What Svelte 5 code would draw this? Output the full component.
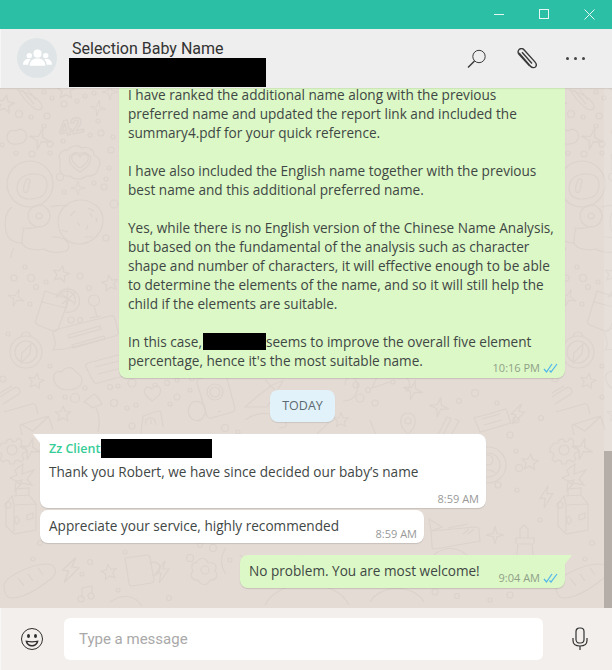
<script lang="ts">
  const messageBody = [
    "I have ranked the additional name along with the previous preferred name and updated the report link and included the summary4.pdf for your quick reference.",
    "I have also included the English name together with the previous best name and this additional preferred name.",
    "Yes, while there is no English version of the Chinese Name Analysis, but based on the fundamental of the analysis such as character shape and number of characters, it will effective enough to be able to determine the elements of the name, and so it will still help the child if the elements are suitable.",
  ];

  // wallpaper: one tile of the doodle pattern, page coordinates minus the chat offset
  const star = "M0-8 2.400-2.600 8-2.200 3.800 1.400 5 7 0 4.200-5 7-3.800 1.400-8-2.200-2.400-2.600Z";
  const spark = "M0-10 2-2 10 0 2 2 0 10-2 2-10 0-2-2Z";
  const bolt = "M3-11-6 1h5L-3 11 7-3H1Z";

  const stamps = [
    { d: star, x: 5, y: 104, s: 1.1, r: 10 },
    { d: star, x: 66, y: 90, s: 1.1, r: 0 },
    { d: spark, x: 110, y: 92, s: 0.8, r: 0 },
    { d: spark, x: 98, y: 108, s: 0.8, r: 10 },
    { d: spark, x: 40, y: 139, s: 1.1, r: 15 },
    { d: spark, x: 78, y: 188, s: 0.7, r: 0 },
    { d: star, x: 61, y: 274, s: 1, r: 12 },
    { d: star, x: 110, y: 283, s: 1, r: -10 },
    { d: spark, x: 16, y: 298, s: 0.9, r: 20 },
    { d: star, x: 36, y: 381, s: 0.95, r: 10 },
    { d: star, x: 63, y: 414, s: 0.95, r: 0 },
    { d: spark, x: 30, y: 449, s: 1.1, r: 15 },
    { d: bolt, x: 70, y: 570, s: 1.2, r: 10 },
    { d: star, x: 109, y: 572, s: 0.95, r: -10 },
    { d: star, x: 341, y: 420, s: 0.9, r: 0 },
    { d: spark, x: 413, y: 390, s: 1, r: 15 },
    { d: spark, x: 439, y: 407, s: 1, r: 10 },
    { d: bolt, x: 517, y: 414, s: 1, r: 10 },
    { d: bolt, x: 546, y: 497, s: 1, r: -5 },
    { d: spark, x: 495, y: 535, s: 0.9, r: 0 },
    { d: star, x: 530, y: 462, s: 1, r: 5 },
    { d: bolt, x: 162, y: 572, s: 1, r: 0 },
    { d: star, x: 285, y: 570, s: 0.9, r: 8 },
  ];

  const dots = [
    [44, 92, 2], [52, 98, 2], [85, 96, 2], [77, 101, 2], [94, 93, 2], [64, 104, 3], [19, 114, 3.500], [31, 117, 2],
    [47, 116, 3], [44, 126, 2], [98, 121, 2], [101, 133, 3], [90, 135, 2], [113, 137, 2], [111, 150, 3], [2, 145, 2],
    [16, 153, 2], [32, 154, 3], [50, 153, 2], [50, 144, 3], [63, 141, 2], [60, 177, 3.500], [64, 192, 2], [94, 183, 2],
    [104, 187, 3], [109, 168, 2], [106, 179, 2], [114, 204, 4], [106, 238, 3], [25, 267, 2], [14, 278, 3], [31, 278, 3.500],
    [36, 287, 2.500], [46, 282, 2], [80, 276, 3], [89, 288, 2.500], [30, 304, 2], [71, 320, 3], [80, 320, 2.500],
    [8, 334, 2], [50, 366, 2], [3, 379, 3], [85, 388, 2], [110, 387, 2.500], [118, 386, 2], [50, 397, 2], [65, 397, 2],
    [75, 398, 4.500], [114, 403, 3.500], [132, 383, 4], [155, 385, 2], [167, 383, 2.500], [177, 380, 2], [177, 397, 3],
    [190, 390, 2], [192, 378, 2.500], [127, 408, 2], [136, 405, 2], [132, 426, 3], [170, 404, 2], [225, 428, 3.500],
    [238, 432, 2], [360, 398, 4], [375, 403, 3], [356, 385, 3], [368, 390, 2.500], [393, 382, 2], [475, 393, 3.500],
    [497, 403, 2], [459, 401, 2.500], [516, 420, 3], [541, 418, 2.500], [510, 435, 3], [516, 451, 2], [519, 468, 3.500],
    [498, 485, 3], [540, 520, 2], [517, 490, 2], [40, 543, 2.500], [33, 559, 2], [8, 505, 3], [82, 574, 2], [90, 562, 2.500],
    [125, 552, 2], [190, 558, 3.500], [200, 545, 2.500], [213, 548, 3.500], [230, 560, 2], [118, 590, 2], [169, 598, 2.500],
    [435, 592, 3], [457, 596, 2.500], [490, 600, 2], [510, 595, 3],
  ];

  const lines = [
    // comet
    "M18 90c8 2 22 8 24 16 1 4-4 5-8 2-6-4-12-12-16-18ZM22 90l12 14M28 90l8 10",
    // cloud
    "M7 137c0-5 5-8 9-6 3-3 9-2 10 3 2 5-2 10-9 10-6 1-10-2-10-7Z",
    // cloud with heart
    "M60 160c-3-6 3-11 8-10 3-5 11-5 14-2 6-2 12 2 12 7 6 3 8 9 4 13 0 6-6 9-12 8-4 4-12 4-16 0-6 1-11-3-10-9Z",
    "M80 168c-8-5-10-10-7-13 3-2 6 0 7 2 1-2 4-4 7-2 3 3 1 8-7 13ZM80 172c-10-6-13-13-9-17 3-3 7-3 9-1 2-2 6-2 9 1 4 4 1 11-9 17Z",
    // astronaut visor, body
    "M17 188c0-10 10-17 24-13 6 2 8 10 4 18-2 4-8 6-16 6-8 0-12-5-12-11ZM26 180c-2 4-3 8-2 12 2 1 4 0 4-2l2-10c-1-2-3-2-4 0Z",
    "M12 207c-6 4-8 14-6 24 1 8 8 12 16 12 2 6 14 8 22 6 6 4 16 4 22 2 4-2 4-8-2-12-4-2-8-2-12-2M50 207c6-2 12-2 18-1M40 226c-4 2-10 3-18 2M22 243c0-4 0-10 2-14M14 248c-2 3-3 7-3 10",
    // cookie dots
    "M28 216a11 11 0 1 0 22 0 11 11 0 1 0-22 0ZM36 216a3 3 0 1 0 6 0 3 3 0 1 0-6 0Z",
    // large cookie
    "M58 222c0-12 10-22 22-22s23 8 23 20-10 24-24 24c-12 0-21-10-21-22ZM70 216l5-5M88 208l6 3M62 230l6 2M85 237h8M77 222l3 4M88 225l-2 5M90 213l2 4M96 218l1 4",
    // glass with citrus
    "M45 291l24 8-11 30c-1 2-3 3-5 2l-15-6c-2-1-3-3-2-5ZM42 302l24 6",
    "M56 298a12 12 0 1 1 22 9c-3 4-8 6-13 5M58 297a9 9 0 1 1 16 8M68 287l-2 22M60 293l14 10M76 292l-14 12",
    // wine glass
    "M94 306a5.500 5.500 0 1 0 0-11 5.500 5.500 0 1 0 0 11ZM94 306l3 11M90 318l11-2",
    // speech bubble
    "M58 329l52-13c3-1 4 0 5 3l3 12c1 3 0 4-3 5l-50 13c-4 1-8 0-12 1 2-3 3-6 2-9l-2-7c-1-3 2-4 5-5ZM68 335l32-9 1 3-32 9ZM72 345l32-9 1 3-32 9Z",
    // compass
    "M10 352a16 16 0 1 0 32 0 16 16 0 1 0-32 0ZM15 352a11 11 0 1 0 22 0 11 11 0 1 0-22 0ZM31 344l-9 9-1 10 9-9ZM21 337a5 5 0 1 1 10 0",
    // card right of compass
    "M88 363l30-8c2-1 3 0 4 2l4 15c1 2 0 3-2 4l-26 7c-2 1-4 0-5-2l-7-14c-1-2 0-3 2-4ZM95 367l24-6M98 374l24-6",
    // cloud
    "M54 380c-2-6 3-10 8-8 2-5 10-6 13-1 3 3 8 5 7 10-1 6-7 9-14 9s-12-3-14-10Z",
    // paperclip
    "M0 397l14-9c4-2 8 3 5 6L3 404M0 393l12-7",
    // envelopes
    "M4 412l28-8c2-1 3 0 4 2l2 8M20 425l25-8c2-1 4 0 5 3l3 10M20 425l2 10M22 425l11 6 16-15",
    // pin-ish umbrella
    "M84 402l10-8c3 2 6 6 8 10l-10 4c-2-3-5-5-8-6ZM96 408c4 8 4 16 2 24",
    // heart, phone, card
    "M152 401c-7-5-9-9-7-12 2-3 5-2 7 0 2-3 6-4 8-1 2 4-1 9-8 13Z",
    "M198 379l24-6c2 0 3 0 4 2l9 33c0 2 0 3-2 4l-22 6c-2 1-3 0-4-2l-10-33c0-2 0-3 1-4ZM207 392a8 8 0 1 1 16 0 8 8 0 1 1-16 0ZM210 392a5 5 0 1 1 10 0 5 5 0 1 1-10 0ZM218 412l3-1",
    "M143 416l15-5c2 0 3 0 3 2l2 14M143 416l-2 18M146 425a5 5 0 1 1 9 0M151 420v4",
    // oval / leaf
    "M190 405c4-6 13-4 15 3 2 7-4 15-11 12-6-3-7-10-4-15ZM245 407c12-10 26-24 38-26l-16 26ZM265 380l20 20M245 420c14-10 30-8 40 2 4 3 0 6-6 6",
    // swirl right of chip
    "M345 385c0-10 10-10 12-2s-2 18-14 18M380 370l-8 18 18-6M398 372c10 4 16 12 8 20",
    // pin
    "M402 427c-3-8 0-14 6-14s9 6 6 14l-6 8ZM405 421a3 3 0 1 0 6 0 3 3 0 1 0-6 0Z",
    // pencil
    "M447 417l4 2-14 28-4-2ZM455 419l4 2-10 18",
    // note card
    "M474 418l32-9 5 14-31 9ZM482 419l18-5M484 425l18-5",
    // second star swirl
    "M370 420l8 20M315 436l20-20",
    // gear
    "M2 443h4l1-3 4-1 2 3 3-1 2-3 4 3-1 3 2 3 3 1v4l-3 1-1 3 2 3-3 3-3-2-3 1-1 3h-4l-1-3-3-1-3 2-3-3 2-3-1-3-3-1v-4ZM7 450a5 5 0 1 0 10 0 5 5 0 1 0-10 0Z",
    // x shape
    "M15 470l8-6-1 10 12-4-7 9 5 6-10-2-7 8 1-10-6-3 7-3ZM16 481l6-1-3 4Z",
    // wheel
    "M470 465a18 18 0 1 0 36 0 18 18 0 1 0-36 0ZM476 465a12 12 0 1 0 24 0 12 12 0 1 0-24 0ZM483 460a5 5 0 1 0 10 0 5 5 0 1 0-10 0ZM480 473c3-4 12-4 15 0",
    // milk carton
    "M6 526v-22l6-8 17-1 7 9v26l-22 4ZM12 496l2 9 22-1M14 505v27M17 524c3-2 3-6 0-8-3 2-3 6 0 8ZM29 494v-6l-13 1v7M27 520l6-2v-5l-6 2Z",
    // lighthouse
    "M513 586l5-42h14l4 42ZM516 544v-6h18v6M520 538v-9l4-4 4 4v9M517 556h15M516 572h18M523 560h4v6h-4Z",
    // play sticker
    "M431 531l44-4c3 0 4 1 4 3l1 11-45 8c-2 0-3 0-3-2ZM429 519l2 12 11-4ZM448 528l20-4M463 534l6-5M468 534l6-5",
    // bread
    "M4 586c0-10 30-22 42-22 10 0 12 8 6 14-10 8-26 20-40 20-6 0-8-6-8-12ZM18 578l6 8M28 574l5 7M38 568l5 7",
    // cup + mix
    "M125 558l22-3c2 0 3 1 3 3l4 22c0 2-1 3-3 3l-19 3c-2 0-3-1-3-3ZM150 563c6-2 10 0 10 5s-4 8-8 7",
    // flower
    "M196 563c3-6 10-6 12 0 6-2 10 3 7 8 4 4 1 10-5 9-2 6-9 6-12 0-6 1-9-5-5-9-3-5 0-10 3-8ZM201 570a4 4 0 1 0 8 0 4 4 0 1 0-8 0Z",
    // music note
    "M82 598v-10l10-2v8M78 599a3 3 0 1 0 6 0 3 3 0 1 0-6 0ZM88 596a3 3 0 1 0 6 0 3 3 0 1 0-6 0Z",
    // lower arcs
    "M265 605c14-28 70-28 84 0M370 602c10-18 44-18 54 0M436 553c16-10 36-2 38 18-4 16-28 20-38 8-6-8-6-20 0-26ZM448 562l4 2M458 560l3 3M450 572l3 2M462 572l2 3",
    "M110 602c12-8 24-8 32 4M226 548c-6 8-6 18 0 26M240 555l16 14M300 555l-8 22",
  ];
</script>

{#snippet ticks()}
  <svg class="ticks" viewBox="0 0 15 10" width="15" height="10" aria-hidden="true">
    <path d="M1 6l2.500 3L9 1M6.500 7.500 8 9l6-8" fill="none" stroke="#4fb6ec" stroke-width="1.200" />
  </svg>
{/snippet}

<div class="window">
  <div class="titlebar">
    <svg class="win-btn" viewBox="0 0 11 11" width="11" height="11" aria-hidden="true"><path d="M0 5.500h10" /></svg>
    <svg class="win-btn" viewBox="0 0 11 11" width="11" height="11" aria-hidden="true"><rect x=".5" y=".5" width="9" height="9" /></svg>
    <svg class="win-btn" viewBox="0 0 11 11" width="11" height="11" aria-hidden="true"><path d="M.5.500l10 10M10.500.500l-10 10" /></svg>
  </div>

  <header class="header">
    <div class="avatar">
      <svg viewBox="0 0 30 20" width="29" height="20" aria-hidden="true">
        <circle cx="15" cy="5.500" r="4.200" />
        <circle cx="6.500" cy="7.500" r="2.800" />
        <circle cx="23.500" cy="7.500" r="2.800" />
        <path d="M7 18c0-5 3-7.500 8-7.500s8 2.500 8 7.500Z" />
        <path d="M0 17c0-4 2.500-6 6-6 .8 0 1.500.1 2 .3-1.500 1.500-2.500 3.500-2.500 5.700ZM30 17c0-4-2.500-6-6-6-.8 0-1.500.1-2 .3 1.500 1.500 2.500 3.500 2.500 5.700Z" />
      </svg>
    </div>
    <div class="header-text">
      <div class="group-name">Selection Baby Name</div>
      <div class="redact header-redact"></div>
    </div>
    <div class="header-icons">
      <svg viewBox="0 0 20 20" width="20" height="20" aria-hidden="true">
        <circle cx="12" cy="7.500" r="6.200" />
        <path d="M7.500 12 1 18.500" stroke-width="1.500" />
      </svg>
      <svg viewBox="0 0 22 22" width="22" height="22" aria-hidden="true">
        <path d="M4 5 15.500 18.200c1.600 1.800 4 1.800 5 .7s1-3.200-.6-5L9.200 2C7.800.4 5.800.2 4.400 1.300S2.500 4.500 4 6.300L14.700 18M7 4.200l10 11.300" stroke-width="1.400" />
      </svg>
      <div class="dots"><span></span><span></span><span></span></div>
    </div>
  </header>

  <main class="chat">
    <svg class="wallpaper" viewBox="0 0 612 520" width="612" height="520" aria-hidden="true">
      <defs>
        <g id="tile" transform="translate(0 -88)">
          {#each stamps as st}
            <path d={st.d} transform="translate({st.x} {st.y}) rotate({st.r}) scale({st.s})" />
          {/each}
          {#each dots as [cx, cy, r]}
            <circle {cx} {cy} {r} />
          {/each}
          {#each lines as d}
            <path {d} />
          {/each}
          <circle cx="30" cy="184" r="23" />
          <text x="58" y="134" class="doodle-num" transform="rotate(-14 72 124)">42</text>
        </g>
      </defs>
      <use href="#tile" />
      <use href="#tile" x="552" />
    </svg>

    <div class="messages">
      <div class="row out">
        <div class="bubble big">
          {#each messageBody as para}
            <p>{para}</p>
          {/each}
          <p>In this case,<span class="redact inline-redact"></span>seems to improve the overall five element percentage, hence it's the most suitable name.</p>
          <span class="meta">10:16 PM {@render ticks()}</span>
        </div>
      </div>

      <div class="date-chip">TODAY</div>

      <div class="row in">
        <div class="bubble incoming tail-left first">
          <div class="sender">Zz Client<span class="redact sender-redact"></span></div>
          <p>Thank you Robert, we have since decided our baby’s name</p>
          <span class="meta dark">8:59 AM</span>
        </div>
      </div>
      <div class="row in tight">
        <div class="bubble incoming second">
          <p>Appreciate your service, highly recommended</p>
          <span class="meta dark">8:59 AM</span>
        </div>
      </div>
      <div class="row out gap">
        <div class="bubble tail-right short">
          <p>No problem. You are most welcome!</p>
          <span class="meta">9:04 AM {@render ticks()}</span>
        </div>
      </div>
    </div>

    <div class="scroll-track"></div>
    <div class="scrollbar"></div>
  </main>

  <footer class="composer">
    <svg class="smile" viewBox="0 0 24 24" width="24" height="24" aria-hidden="true">
      <circle cx="12" cy="12" r="10.500" fill="none" />
      <ellipse cx="8.500" cy="9" rx="1.500" ry="2" class="solid" />
      <ellipse cx="15.500" cy="9" rx="1.500" ry="2" class="solid" />
      <path d="M5.500 13.500c4 1 9 1 13 0-.5 4-3.500 6-6.500 6s-6-2-6.500-6Z" class="solid" />
      <path d="M7.500 15c3 .5 6 .5 9 0-.5 2-2.500 3-4.500 3s-4-1-4.500-3Z" class="hole" />
    </svg>
    <div class="input">Type a message</div>
    <svg class="mic" viewBox="0 0 16 24" width="16" height="24" aria-hidden="true">
      <rect x="4" y="1" width="8" height="15" rx="3.500" />
      <path d="M1 11v2.500C1 17 4 19 8 19s7-2 7-5.500V11M8 19v4" />
    </svg>
  </footer>
</div>

<style>
  :global(body) {
    margin: 0;
  }

  .window {
    width: 612px;
    height: 670px;
    display: flex;
    flex-direction: column;
    overflow: hidden;
    font-family: "Open Sans", sans-serif;
    color: #3f4745;
  }

  .titlebar {
    height: 29px;
    flex: none;
    background: #2bbfa5;
    display: flex;
    justify-content: flex-end;
    align-items: center;
    gap: 34px;
    padding-right: 17px;
  }

  .win-btn {
    fill: none;
    stroke: #e6f7f3;
    stroke-width: 1;
  }

  .header {
    height: 59px;
    flex: none;
    box-sizing: border-box;
    background: #eeeeee;
    display: flex;
    align-items: flex-start;
    padding-left: 16px;
    border-left: 1px solid #f6f6f6;
    position: relative;
    z-index: 1;
    box-shadow: 0 1px 1px rgba(0, 0, 0, 0.07);
  }

  .avatar {
    width: 40px;
    height: 40px;
    margin-top: 9px;
    border-radius: 50%;
    background: #dfe5e7;
    display: flex;
    align-items: center;
    justify-content: center;
  }

  .avatar svg {
    fill: #ffffff;
  }

  .header-text {
    margin-left: 14px;
    padding-top: 10px;
    flex: 1;
  }

  .group-name {
    font-family: Roboto, sans-serif;
    font-size: 16px;
    line-height: 19px;
    color: #333333;
    margin-left: 1px;
  }

  .header-redact {
    width: 197px;
    height: 29px;
    margin-left: -2px;
  }

  .redact {
    background: #000000;
    display: block;
  }

  .header-icons {
    display: flex;
    align-items: center;
    gap: 28px;
    height: 59px;
    padding-right: 27px;
  }

  .header-icons svg {
    fill: none;
    stroke: #3a3a3a;
  }

  .dots {
    display: flex;
    gap: 5px;
    margin-left: 1px;
  }

  .dots span {
    width: 3px;
    height: 3px;
    border-radius: 50%;
    background: #444444;
  }

  .chat {
    flex: 1;
    min-height: 0;
    position: relative;
    background: #e4dbd5;
    overflow: hidden;
  }

  .wallpaper {
    position: absolute;
    inset: 0;
    fill: none;
    stroke: #dcd3cc;
    stroke-width: 1.200;
  }

  .doodle-num {
    font-family: "Liberation Sans", sans-serif;
    font-size: 22px;
    font-weight: 700;
  }

  .scroll-track {
    position: absolute;
    right: 0;
    top: 0;
    bottom: 0;
    width: 8px;
    background: rgba(255, 255, 255, 0.1);
  }

  .scrollbar {
    position: absolute;
    right: 0;
    bottom: 0;
    width: 8px;
    height: 157px;
    background: #b5aea8;
  }

  .messages {
    position: relative;
    height: 100%;
    box-sizing: border-box;
    display: flex;
    flex-direction: column;
    justify-content: flex-end;
    padding: 0 47px 20px 40px;
  }

  .row {
    display: flex;
    flex: none;
  }

  .row.out {
    justify-content: flex-end;
  }

  .row.in {
    justify-content: flex-start;
    margin-top: 12px;
  }

  .row.in.tight {
    margin-top: 2px;
  }

  .row.gap {
    margin-top: 12px;
  }

  .bubble {
    position: relative;
    box-sizing: border-box;
    background: #dcf8c6;
    border-radius: 8px;
    padding: 5px 9px 8px;
    box-shadow: 0 1px 1px rgba(0, 0, 0, 0.13);
    font-size: 13.600px;
    line-height: 19px;
  }

  .bubble p {
    margin: 0;
  }

  .big {
    width: 446px;
    padding: 0 11px 8px 9px;
    border-radius: 0 0 8px 8px;
  }

  .big p + p {
    margin-top: 19px;
  }

  .inline-redact {
    display: inline-block;
    width: 63px;
    height: 17px;
    margin-left: 1px;
    vertical-align: -3px;
  }

  .meta {
    position: absolute;
    right: 7px;
    bottom: 3px;
    font-size: 11px;
    line-height: 14px;
    color: #8fa088;
    display: flex;
    align-items: center;
    gap: 3px;
    white-space: nowrap;
  }

  .meta.dark {
    color: #999999;
    right: 7px;
    bottom: 2px;
  }

  .ticks {
    flex: none;
  }

  .date-chip {
    align-self: center;
    flex: none;
    margin-top: 12px;
    width: 65px;
    height: 32px;
    border-radius: 8px;
    background: #e1f2fb;
    box-shadow: 0 1px 1px rgba(0, 0, 0, 0.1);
    font-size: 12.500px;
    line-height: 32px;
    text-align: center;
    color: #5c6a70;
  }

  .incoming {
    background: #ffffff;
  }

  .first {
    width: 446px;
    height: 74px;
    border-top-left-radius: 0;
  }

  .first p {
    margin-top: 4px;
  }

  .second {
    width: 384px;
    height: 33px;
    padding-top: 6px;
  }

  .short {
    width: 325px;
    height: 33px;
    padding-top: 6px;
    border-top-right-radius: 0;
  }

  .sender {
    display: flex;
    align-items: center;
    font-size: 12.500px;
    font-weight: 600;
    line-height: 19px;
    color: #35cd96;
    height: 19px;
  }

  .sender-redact {
    width: 111px;
    height: 19px;
    margin-left: 1px;
  }

  .tail-left::before {
    content: "";
    position: absolute;
    top: 0;
    left: -7px;
    width: 0;
    height: 0;
    border-top: 9px solid #ffffff;
    border-left: 7px solid transparent;
  }

  .tail-right::before {
    content: "";
    position: absolute;
    top: 0;
    right: -7px;
    width: 0;
    height: 0;
    border-top: 9px solid #dcf8c6;
    border-right: 7px solid transparent;
  }

  .composer {
    height: 62px;
    flex: none;
    box-sizing: border-box;
    background: #f3efec;
    border-left: 1px solid #f8f7f5;
    display: flex;
    align-items: center;
    padding: 0 21px 0 19px;
  }

  .smile {
    fill: none;
    stroke: #2f2f2f;
    stroke-width: 1;
    flex: none;
  }

  .smile .solid {
    fill: #2f2f2f;
    stroke: none;
  }

  .smile .hole {
    fill: #f3efec;
    stroke: none;
  }

  .input {
    width: 479px;
    height: 42px;
    margin-left: 20px;
    margin-right: 29px;
    flex: none;
    box-sizing: border-box;
    background: #ffffff;
    border-radius: 6px;
    padding-left: 15px;
    font-family: Roboto, sans-serif;
    font-size: 15px;
    line-height: 42px;
    color: #a9a9a9;
  }

  .mic {
    fill: none;
    stroke: #333333;
    stroke-width: 1.200;
    flex: none;
  }
</style>
